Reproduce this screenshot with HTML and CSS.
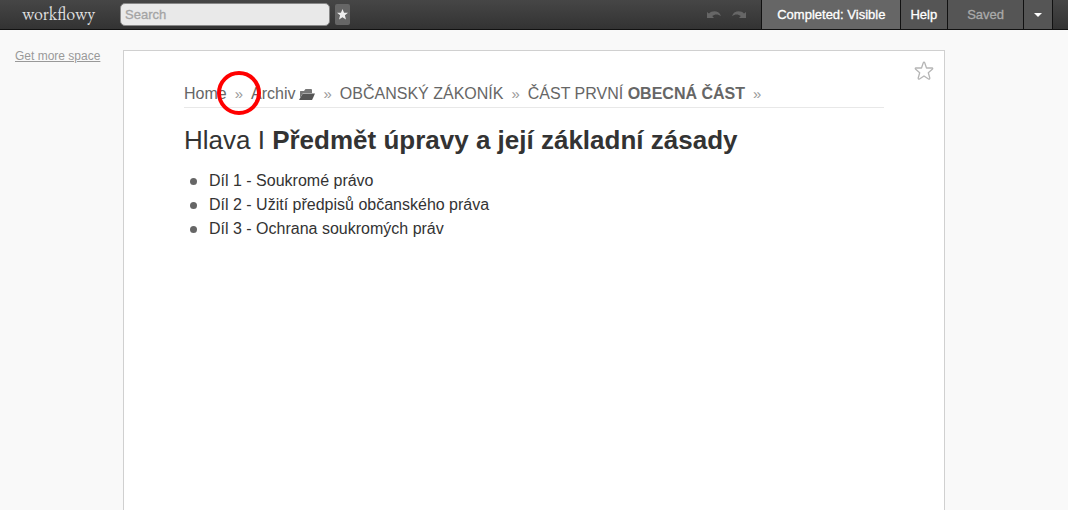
FILE: index.html
```html
<!DOCTYPE html>
<html lang="cs">
<head>
<meta charset="utf-8">
<title>Hlava I Předmět úpravy a její základní zásady - WorkFlowy</title>
<link rel="stylesheet" href="styles.css">
</head>
<body>
<header class="bar">
  <a class="logo" href="#">workflowy</a>
  <form class="search">
    <input class="search-box" type="text" placeholder="Search" aria-label="Search">
    <button class="starred" type="button" aria-label="Starred pages">
      <svg width="11" height="11" viewBox="0 0 12 12"><path fill="#eee" d="M6 0 7.700 4H12L8.600 6.900 9.800 11.500 6 9 2.200 11.500 3.400 6.900 0 4H4.300Z"/></svg>
    </button>
  </form>
  <div class="history">
    <button class="step" type="button" aria-label="Undo">
      <svg width="14" height="8" viewBox="0 0 14 8"><path fill="#666" d="M0 1 2 2.500C5-.7 12-.7 14 5 11 2.800 7.500 3 5.200 5L7 7H0Z"/></svg>
    </button>
    <button class="step" type="button" aria-label="Redo">
      <svg width="14" height="8" viewBox="0 0 14 8"><path fill="#666" d="M14 1 12 2.500C9-.7 2-.7 0 5 3 2.800 6.500 3 8.800 5L7 7H14Z"/></svg>
    </button>
  </div>
  <nav class="menu">
    <button class="item item-lit" type="button">Completed: Visible</button>
    <button class="item item-help" type="button">Help</button>
    <button class="item item-saved" type="button">Saved</button>
    <button class="item item-more" type="button" aria-label="Menu">
      <svg width="8" height="4" viewBox="0 0 8 4"><path fill="#fff" d="M0 0H8L4 4Z"/></svg>
    </button>
  </nav>
</header>
<div class="layout">
  <aside class="side"><a class="space" href="#">Get more space</a></aside>
  <main class="page">
    <button class="favourite" type="button" aria-label="Star this page">
      <svg width="20" height="20" viewBox="0 0 20 20"><path fill="none" stroke="#b5b5b5" stroke-width="1.300" stroke-linejoin="round" d="M10 1.200Q10.500 1.200 10.800 2L12.500 7H18Q19.300 7.300 18.300 8.300L14.300 11.700 15.800 17Q15.800 18.600 14.500 18L10 15 5.500 18Q4.200 18.600 4.200 17L5.700 11.700 1.700 8.300Q.7 7.300 2 7H7.500L9.200 2Q9.500 1.200 10 1.200Z"/></svg>
    </button>
    <nav class="crumbs" aria-label="Breadcrumb">
      <a class="crumb" href="#">Home</a>
      <span class="sep">»<svg class="ring" width="44" height="44" viewBox="0 0 44 44"><circle cx="22" cy="22" r="20" fill="none" stroke="#f00" stroke-width="4"/></svg></span>
      <a class="crumb crumb-icon" href="#">Archiv <svg class="folder" width="16" height="11" viewBox="0 0 16 11"><path fill="#777" d="M1 8V2.500Q1 2 1.500 2H5L6.500 0H12Q13 0 13 1V4H4L1 9Z"/><path fill="#555" d="M3.800 4.500H16L13.300 10.500Q13 11 12.500 11H0Z"/></svg></a>
      <span class="sep">»</span>
      <a class="crumb" href="#">OBČANSKÝ ZÁKONÍK</a>
      <span class="sep">»</span>
      <a class="crumb" href="#">ČÁST PRVNÍ <b>OBECNÁ ČÁST</b></a>
      <span class="sep">»</span>
    </nav>
    <h1 class="title">Hlava I <b>Předmět úpravy a její základní zásady</b></h1>
    <ul class="list">
      <li class="entry">Díl 1 - Soukromé právo</li>
      <li class="entry">Díl 2 - Užití předpisů občanského práva</li>
      <li class="entry">Díl 3 - Ochrana soukromých práv</li>
    </ul>
  </main>
</div>
</body>
</html>
```
FILE: styles.css
```css
* {
  box-sizing: border-box;
}

body {
  margin: 0;
  min-height: 100vh;
  display: flex;
  flex-direction: column;
  background: #f9f9f9;
  color: #333;
  font-family: "Liberation Sans", Arial, sans-serif;
}

button {
  margin: 0;
  padding: 0;
  border: 0;
  background: none;
  font: inherit;
}

svg {
  display: block;
}

.bar {
  display: flex;
  height: 30px;
  padding: 0 15px 0 22px;
  border-bottom: 1px solid #111;
  background: linear-gradient(#464646, #333);
  font-size: 13px;
}

.logo {
  width: 98px;
  color: #ddd;
  font: 18px/28px "EB Garamond", Garamond, "Liberation Serif", serif;
  text-decoration: none;
}

.search {
  display: flex;
  align-items: center;
  gap: 5px;
}

.search-box {
  width: 210px;
  height: 23px;
  padding: 0 4px;
  border: 1px solid #888;
  border-radius: 5px;
  background: #e9e9e9;
  font: 13px "Liberation Sans", Arial, sans-serif;
}

.search-box::placeholder {
  color: #a4a4a4;
  -webkit-text-stroke: 0.3px #a4a4a4;
}

.starred {
  display: grid;
  place-items: center;
  width: 15px;
  height: 21px;
  border-radius: 2px;
  background: #666;
}

.history {
  display: flex;
  align-items: center;
  gap: 11px;
  margin-left: auto;
  padding-right: 15px;
}

.menu {
  display: flex;
  border-right: 1px solid #111;
}

.item {
  padding: 0 15px;
  border-left: 1px solid #111;
  background: #555;
  color: #fff;
  -webkit-text-stroke: 0.3px currentColor;
}

.item-lit {
  background: #666;
}

.item-help {
  padding: 0 10px 0 9px;
}

.item-saved {
  padding: 0 19px;
  color: #aaa;
}

.item-more {
  padding: 0 10px;
}

.layout {
  flex: 1;
  display: grid;
  grid-template-columns: 1fr minmax(0, 822px) 1fr;
}

.side {
  padding: 16px 0 0 15px;
}

.space {
  color: #999;
  font-size: 12px;
  line-height: 16px;
  white-space: nowrap;
}

.page {
  position: relative;
  margin-top: 20px;
  padding: 33px 60px;
  border: 1px solid #d0d0d0;
  border-bottom: 0;
  background: #fff;
}

.favourite {
  position: absolute;
  top: 10px;
  right: 10px;
}

.crumbs {
  display: flex;
  flex-wrap: wrap;
  gap: 8px;
  padding-bottom: 3px;
  border-bottom: 1px solid #e8e8e8;
  font-size: 16px;
  line-height: 20px;
}

.crumb {
  color: #666;
  text-decoration: none;
}

.crumb-icon {
  display: flex;
  align-items: center;
  gap: 4px;
}

.sep {
  position: relative;
  color: #999;
  font-size: 15px;
}

.ring {
  position: absolute;
  top: -13px;
  left: -18px;
}

.title {
  margin: 16px 0 13px;
  font-size: 26px;
  font-weight: normal;
  line-height: 32px;
}

.list {
  margin: 0;
  padding: 0;
  list-style: none;
  font-size: 16px;
  line-height: 24px;
}

.entry {
  display: flex;
  align-items: center;
  gap: 12px;
  padding-left: 6px;
}

.entry::before {
  content: "";
  width: 7px;
  height: 7px;
  border-radius: 50%;
  background: #666;
}
```
